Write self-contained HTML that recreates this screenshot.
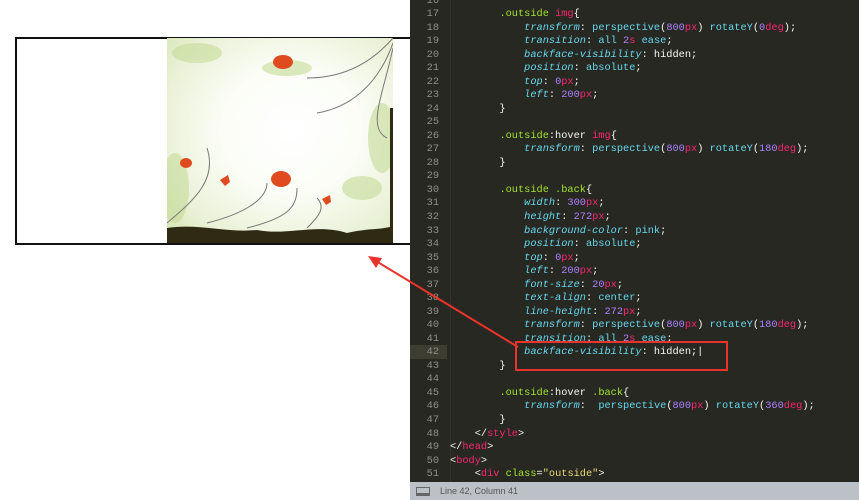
<!DOCTYPE html>
<html><head><meta charset="utf-8"><style>
*{margin:0;padding:0;box-sizing:border-box}
body{width:859px;height:500px;overflow:hidden;background:#fff;position:relative;font-family:"Liberation Sans",sans-serif}
#box{position:absolute;left:15px;top:37px;width:400px;height:208px;border:2px solid #111;background:#fff}
#img{position:absolute;left:167px;top:38px;width:226px;height:205px;overflow:hidden;background:radial-gradient(ellipse at 55% 45%,#fff 0%,#fbfdf6 40%,#e9f1d6 75%,#d3e3ae 100%)}
#ed{position:absolute;left:410px;top:0;width:449px;height:500px;background:#272822}
.ln{position:absolute;left:0;width:29px;text-align:right;color:#8f908a;font:10.3px/13.53px "Liberation Mono",monospace}
.cd{position:absolute;left:40px;white-space:pre;color:#f8f8f2;font:10.3px/13.53px "Liberation Mono",monospace}
.s{color:#a6e22e}.t{color:#f92672}.p{color:#66d9ef;font-style:italic}.v{color:#66d9ef}.n{color:#ae81ff}.u{color:#f92672}.q{color:#e6db74}
#gut{position:absolute;left:40px;top:0;width:1px;height:482px;background:#333}
#hl{position:absolute;left:0;width:37px;height:13.5px;background:#3e3d32}
#st{position:absolute;left:410px;top:482px;width:449px;height:18px;background:#bcc1c7;color:#555;font-size:9px;line-height:18px;padding-left:30px}
#scroll{position:absolute;left:852px;top:190px;width:5px;height:40px;background:#3a3a35}
</style></head><body>
<div id="box"></div>
<div id="img">
<svg width="226" height="205" viewBox="0 0 226 205">
<g fill="#c5db98" opacity=".6"><ellipse cx="8" cy="150" rx="14" ry="35"/><ellipse cx="215" cy="100" rx="14" ry="35"/><ellipse cx="30" cy="15" rx="25" ry="10"/><ellipse cx="120" cy="30" rx="25" ry="8"/><ellipse cx="195" cy="150" rx="20" ry="12"/></g>
<g fill="none" stroke="#777" stroke-width="1"><path d="M226 0 C200 30 170 40 140 40"/><path d="M226 5 C210 50 180 70 150 75"/><path d="M226 10 C215 60 200 90 220 100"/><path d="M0 185 C30 160 50 140 40 110"/><path d="M40 185 C80 175 100 160 100 145"/><path d="M80 190 C120 180 130 170 130 150"/><path d="M140 190 C150 180 160 170 150 160"/></g>
<g fill="#e04a1f"><ellipse cx="116" cy="24" rx="10" ry="7"/><ellipse cx="114" cy="141" rx="10" ry="8"/><ellipse cx="19" cy="125" rx="6" ry="5"/><path d="M53 142 l8 -5 l2 7 l-5 4z"/><path d="M155 161 l8 -4 l1 7 l-5 3z"/></g>
<path d="M0 205 L0 190 C30 185 60 195 90 192 C120 198 150 185 180 195 C200 190 215 192 226 188 L226 205Z" fill="#2f2a14"/>
<rect x="223" y="70" width="3" height="120" fill="#2f2a14"/>
</svg></div>
<div id="ed">
<div id="gut"></div>
<div id="hl" style="top:345px"></div>
<div class="ln" style="top:-5.5px">16<br>17<br>18<br>19<br>20<br>21<br>22<br>23<br>24<br>25<br>26<br>27<br>28<br>29<br>30<br>31<br>32<br>33<br>34<br>35<br>36<br>37<br>38<br>39<br>40<br>41<br>42<br>43<br>44<br>45<br>46<br>47<br>48<br>49<br>50<br>51<br>52</div>
<div class="cd" style="top:-5.5px">
        <span class="s">.outside</span> <span class="t">img</span>{
            <span class="p">transform</span>: <span class="v">perspective</span>(<span class="n">800</span><span class="u">px</span>) <span class="v">rotateY</span>(<span class="n">0</span><span class="u">deg</span>);
            <span class="p">transition</span>: <span class="v">all</span> <span class="n">2</span><span class="u">s</span> <span class="v">ease</span>;
            <span class="p">backface-visibility</span>: hidden;
            <span class="p">position</span>: <span class="v">absolute</span>;
            <span class="p">top</span>: <span class="n">0</span><span class="u">px</span>;
            <span class="p">left</span>: <span class="n">200</span><span class="u">px</span>;
        }

        <span class="s">.outside</span>:hover <span class="t">img</span>{
            <span class="p">transform</span>: <span class="v">perspective</span>(<span class="n">800</span><span class="u">px</span>) <span class="v">rotateY</span>(<span class="n">180</span><span class="u">deg</span>);
        }

        <span class="s">.outside .back</span>{
            <span class="p">width</span>: <span class="n">300</span><span class="u">px</span>;
            <span class="p">height</span>: <span class="n">272</span><span class="u">px</span>;
            <span class="p">background-color</span>: <span class="v">pink</span>;
            <span class="p">position</span>: <span class="v">absolute</span>;
            <span class="p">top</span>: <span class="n">0</span><span class="u">px</span>;
            <span class="p">left</span>: <span class="n">200</span><span class="u">px</span>;
            <span class="p">font-size</span>: <span class="n">20</span><span class="u">px</span>;
            <span class="p">text-align</span>: <span class="v">center</span>;
            <span class="p">line-height</span>: <span class="n">272</span><span class="u">px</span>;
            <span class="p">transform</span>: <span class="v">perspective</span>(<span class="n">800</span><span class="u">px</span>) <span class="v">rotateY</span>(<span class="n">180</span><span class="u">deg</span>);
            <span class="p">transition</span>: <span class="v">all</span> <span class="n">2</span><span class="u">s</span> <span class="v">ease</span>;
            <span class="p">backface-visibility</span>: hidden;|
        }

        <span class="s">.outside</span>:hover <span class="s">.back</span>{
            <span class="p">transform</span>:  <span class="v">perspective</span>(<span class="n">800</span><span class="u">px</span>) <span class="v">rotateY</span>(<span class="n">360</span><span class="u">deg</span>);
        }
    &lt;/<span class="t">style</span>&gt;
&lt;/<span class="t">head</span>&gt;
&lt;<span class="t">body</span>&gt;
    &lt;<span class="t">div</span> <span class="s">class</span>=<span class="q">"outside"</span>&gt;
</div>
<div id="scroll"></div>
</div>
<div id="st">Line 42, Column 41</div>
<div style="position:absolute;left:416px;top:487px;width:14px;height:9px;border:1px solid #666;border-bottom-width:3px"></div>
<svg style="position:absolute;left:0;top:0" width="859" height="500">
<line x1="518" y1="347" x2="376" y2="261" stroke="#e8342c" stroke-width="2"/>
<path d="M368 256 L382 258 L376 268Z" fill="#e8342c"/>
<rect x="516" y="342" width="211" height="28" fill="none" stroke="#e8342c" stroke-width="2"/>
</svg>
</body></html>
